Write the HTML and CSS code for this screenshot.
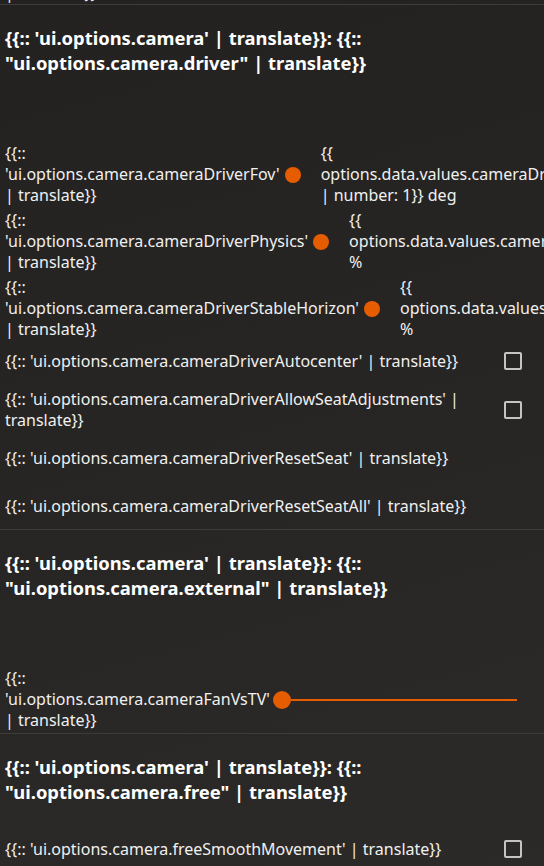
FILE: index.html
```html
<!DOCTYPE html>
<html lang="en">
<head>
<meta charset="utf-8">
<title>Camera options</title>
<link rel="stylesheet" href="styles.css">
</head>
<body>
<div class="page">
  <div class="tail"><div class="label">| translate}}</div></div>

  <section class="section">
    <h2 class="heading">{{:: 'ui.options.camera' | translate}}: {{:: "ui.options.camera.driver" | translate}}</h2>
    <div class="group group-driver">
      <div class="row row-slider">
        <div class="label label-min">{{:: 'ui.options.camera.cameraDriverFov' | translate}}</div>
        <div class="slider"><span class="thumb"></span></div>
        <div class="value">{{ options.data.values.cameraDriverFov | number: 1}} deg</div>
      </div>
      <div class="row row-slider">
        <div class="label label-min">{{:: 'ui.options.camera.cameraDriverPhysics' | translate}}</div>
        <div class="slider"><span class="thumb"></span></div>
        <div class="value">{{ options.data.values.cameraDriverPhysics*100}} %</div>
      </div>
      <div class="row row-slider">
        <div class="label label-min">{{:: 'ui.options.camera.cameraDriverStableHorizon' | translate}}</div>
        <div class="slider"><span class="thumb"></span></div>
        <div class="value">{{ options.data.values.cameraDriverStableHorizon*100}} %</div>
      </div>
      <div class="row row-check">
        <div class="label label-fill">{{:: 'ui.options.camera.cameraDriverAutocenter' | translate}}</div>
        <span class="checkbox"></span>
      </div>
      <div class="row row-check">
        <div class="label label-fill">{{:: 'ui.options.camera.cameraDriverAllowSeatAdjustments' | translate}}</div>
        <span class="checkbox"></span>
      </div>
      <div class="row row-button">
        <div class="label label-fill">{{:: 'ui.options.camera.cameraDriverResetSeat' | translate}}</div>
      </div>
      <div class="row row-button">
        <div class="label label-fill">{{:: 'ui.options.camera.cameraDriverResetSeatAll' | translate}}</div>
      </div>
    </div>
  </section>

  <section class="section">
    <h2 class="heading">{{:: 'ui.options.camera' | translate}}: {{:: "ui.options.camera.external" | translate}}</h2>
    <div class="group group-external">
      <div class="row row-slider">
        <div class="label label-min">{{:: 'ui.options.camera.cameraFanVsTV' | translate}}</div>
        <div class="slider-wide"><span class="thumb thumb-lg"></span><span class="track"></span></div>
      </div>
    </div>
  </section>

  <section class="section">
    <h2 class="heading">{{:: 'ui.options.camera' | translate}}: {{:: "ui.options.camera.free" | translate}}</h2>
    <div class="group group-free">
      <div class="row row-check">
        <div class="label label-fill">{{:: 'ui.options.camera.freeSmoothMovement' | translate}}</div>
        <span class="checkbox"></span>
      </div>
    </div>
  </section>
</div>
</body>
</html>
```
FILE: styles.css
```css
html, body {
  margin: 0;
  height: 100%;
  overflow: hidden;
}

body {
  background: linear-gradient(165deg, #242220 0%, #272523 45%, #2b2a28 100%);
  color: #f0f0f0;
  font-family: "Noto Sans", "Open Sans", sans-serif;
  font-size: 16px;
  line-height: 21px;
}

.page {
  display: flex;
  flex-direction: column;
}

.tail {
  margin-top: -17px;
  padding: 0 22px 0 5px;
}

.section {
  border-top: 1px solid #3e3c3a;
  padding: 0 22px 0 5px;
  overflow: hidden;
}

.heading {
  margin: 20px 0 0;
  font-size: 18.4px;
  line-height: 25px;
  font-weight: 700;
  color: #ffffff;
}

.group-driver {
  margin-top: 66px;
  margin-bottom: 4px;
}

.group-external {
  margin-top: 66px;
}

.group-free {
  margin-top: 26px;
}

.row {
  display: flex;
  align-items: center;
}

.row-slider {
  padding: 2px 0;
}

.label-min,
.value {
  flex: none;
  width: min-content;
}

.label-fill {
  flex: 1;
  min-width: 0;
}

.slider {
  flex: none;
  width: 16px;
  height: 16px;
  margin: 0 20px 0 5px;
}

.thumb {
  display: block;
  flex: none;
  width: 16px;
  height: 16px;
  border-radius: 50%;
  background: #e65c00;
}

.thumb-lg {
  width: 18px;
  height: 18px;
}

.slider-wide {
  flex: 1;
  display: flex;
  align-items: center;
  margin: 0 5px 0 3px;
}

.track {
  flex: 1;
  height: 2px;
  background: #e65c00;
}

.row-check {
  padding: 8.5px 0;
  gap: 14px;
}

.checkbox {
  flex: none;
  width: 18px;
  height: 18px;
  box-sizing: border-box;
  border: 2px solid #c4c4c4;
  border-radius: 2px;
}

.row-button {
  padding: 8.5px 0;
}

.row-button + .row-button {
  margin-top: 10px;
}
```
